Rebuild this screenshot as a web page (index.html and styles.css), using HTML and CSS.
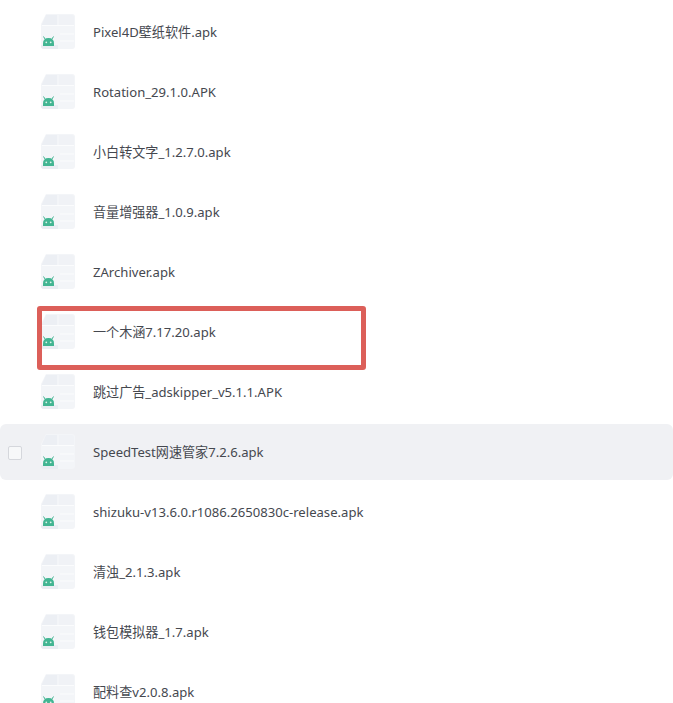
FILE: index.html
```html
<!DOCTYPE html>
<html lang="zh-CN">
<head>
    <meta charset="UTF-8">
    <title>文件列表</title>
    <link rel="stylesheet" href="styles.css">
</head>
<body>
    <svg class="defs" width="0" height="0">
        <symbol id="apk" viewBox="0 0 38 38">
            <path d="M2 11 L7 1 H33 Q36 1 36 4 V33 Q36 36 33 36 H5 Q2 36 2 33 Z" fill="#f3f5f8"/>
            <path d="M3 11 L7 2 H18 V12 H3 Z" fill="#eceff4"/>
            <path d="M20 2 H33 Q35 2 35 4 V12 H20 Z" fill="#f0f2f6"/>
            <path d="M3 12.500 H35 M21 21 H35 M21 28 H35" stroke="#fbfcfd" stroke-width="1"/>
            <path d="M2 33 Q2 36 5 36 H19 V32 H2 Z" fill="#e9edf2"/>
            <path d="M4 33 V30.500 Q4 25 9.500 25 Q15 25 15 30.500 V33 Z" fill="#42b592"/>
            <path d="M6 26 L4.500 23.500 M13 26 L14.500 23.500" stroke="#42b592" stroke-width="1"/>
            <circle cx="7.300" cy="29.300" r="0.900" fill="#dff3ec"/>
            <circle cx="11.700" cy="29.300" r="0.900" fill="#dff3ec"/>
        </symbol>
    </svg>
    <ul class="file-list">
        <li class="file"><svg class="file-icon"><use href="#apk"/></svg><span class="file-name">Pixel4D壁纸软件.apk</span></li>
        <li class="file"><svg class="file-icon"><use href="#apk"/></svg><span class="file-name">Rotation_29.1.0.APK</span></li>
        <li class="file"><svg class="file-icon"><use href="#apk"/></svg><span class="file-name">小白转文字_1.2.7.0.apk</span></li>
        <li class="file"><svg class="file-icon"><use href="#apk"/></svg><span class="file-name">音量增强器_1.0.9.apk</span></li>
        <li class="file"><svg class="file-icon"><use href="#apk"/></svg><span class="file-name">ZArchiver.apk</span></li>
        <li class="file marked"><svg class="file-icon"><use href="#apk"/></svg><span class="file-name">一个木涵7.17.20.apk</span></li>
        <li class="file"><svg class="file-icon"><use href="#apk"/></svg><span class="file-name">跳过广告_adskipper_v5.1.1.APK</span></li>
        <li class="file hover"><span class="check"></span><svg class="file-icon"><use href="#apk"/></svg><span class="file-name">SpeedTest网速管家7.2.6.apk</span></li>
        <li class="file"><svg class="file-icon"><use href="#apk"/></svg><span class="file-name">shizuku-v13.6.0.r1086.2650830c-release.apk</span></li>
        <li class="file"><svg class="file-icon"><use href="#apk"/></svg><span class="file-name">清浊_2.1.3.apk</span></li>
        <li class="file"><svg class="file-icon"><use href="#apk"/></svg><span class="file-name">钱包模拟器_1.7.apk</span></li>
        <li class="file"><svg class="file-icon"><use href="#apk"/></svg><span class="file-name">配料查v2.0.8.apk</span></li>
    </ul>
</body>
</html>
```

FILE: styles.css
```css
html, body {
    height: 703px;
    overflow: hidden;
}

body {
    margin: 0;
    background-color: #ffffff;
    font-family: "Noto Sans", "Noto Sans CJK SC", sans-serif;
    font-size: 13.1px;
    line-height: 18px;
    color: #45484f;
}

.defs {
    position: absolute;
}

.file-list {
    list-style: none;
    margin: 0;
    padding: 4px 0 0;
    display: flex;
    flex-direction: column;
    gap: 4px;
}

.file {
    position: relative;
    flex: none;
    height: 56px;
    display: flex;
    align-items: center;
    padding-left: 39px;
    border-radius: 6px;
}

.file-icon {
    width: 38px;
    height: 38px;
    flex: none;
    margin-right: 16px;
    filter: blur(0.4px);
}

.file-name {
    margin-bottom: 1px;
}

.file.hover {
    background-color: #f0f1f4;
}

.check {
    position: absolute;
    left: 8px;
    top: 22px;
    width: 12px;
    height: 12px;
    border: 1px solid #d5d7dc;
    border-radius: 2px;
    background-color: #f7f8f9;
}

/* red box drawn over the row */
.marked::after {
    content: "";
    position: absolute;
    left: 37px;
    top: 2px;
    width: 319px;
    height: 54px;
    border: 5px solid #dc5f59;
    border-radius: 3px;
}
```
